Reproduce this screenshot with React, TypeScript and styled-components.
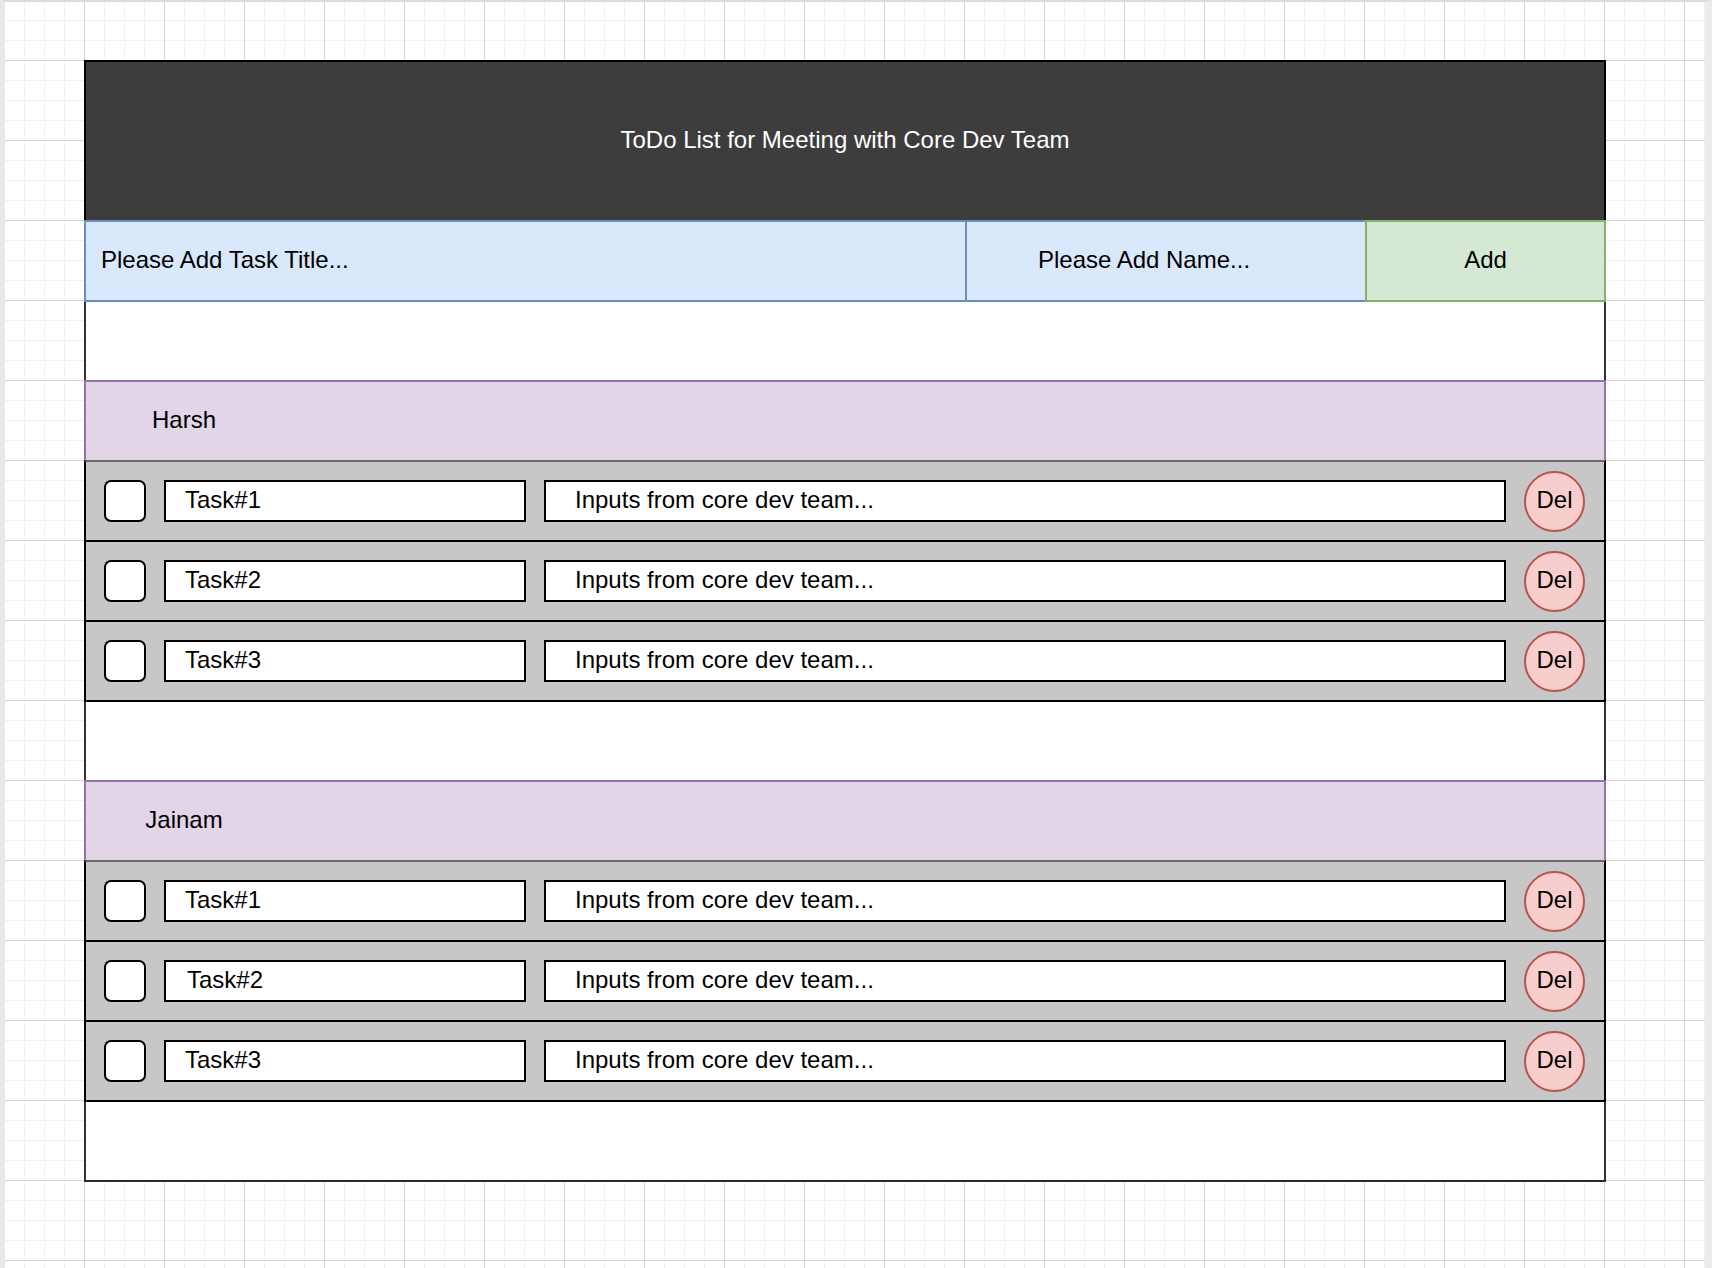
import React from "react";
import styled, { createGlobalStyle } from "styled-components";

interface Task {
  title: string;
  note: string;
  indent?: number;
}

interface Group {
  name: string;
  tasks: Task[];
}

const NOTE = "Inputs from core dev team...";

const groups: Group[] = [
  {
    name: "Harsh",
    tasks: [
      { title: "Task#1", note: NOTE },
      { title: "Task#2", note: NOTE },
      { title: "Task#3", note: NOTE },
    ],
  },
  {
    name: "Jainam",
    tasks: [
      { title: "Task#1", note: NOTE },
      { title: "Task#2", note: NOTE, indent: 21 },
      { title: "Task#3", note: NOTE },
    ],
  },
];

const App = () => {
  return (
    <>
      <GlobalStyle />
      <Canvas>
        <Board>
          <Header>ToDo List for Meeting with Core Dev Team</Header>
          <InputRow>
            <TitleField>Please Add Task Title...</TitleField>
            <NameField>Please Add Name...</NameField>
            <AddButton>Add</AddButton>
          </InputRow>
          {groups.map((group, gi) => (
            <React.Fragment key={group.name}>
              <Spacer />
              <GroupHeader>
                <GroupName>{group.name}</GroupName>
              </GroupHeader>
              {group.tasks.map((task, ti) => (
                <TaskRow key={ti} $first={ti === 0}>
                  <Checkbox />
                  <TitleBox $indent={task.indent ?? 19}>{task.title}</TitleBox>
                  <NoteBox>{task.note}</NoteBox>
                  <DelButton>Del</DelButton>
                </TaskRow>
              ))}
              {gi === groups.length - 1 ? <Spacer $last /> : null}
            </React.Fragment>
          ))}
        </Board>
      </Canvas>
    </>
  );
};

export default App;

const GlobalStyle = createGlobalStyle`
  html, body {
    margin: 0;
    padding: 0;
  }
  body {
    font-family: "Liberation Sans", Arial, Helvetica, sans-serif;
    color: #000;
  }
  * {
    box-sizing: border-box;
  }
`;

const Canvas = styled.div`
  min-height: 100vh;
  border-top: 2px solid #dcdcdc;
  border-left: 5px solid #e9e9e9;
  border-right: 7px solid #ececec;
  padding: 58px 0 0 79px;
  background-color: #fff;
  background-image:
    linear-gradient(to right, #d5d5d5 1px, transparent 1px),
    linear-gradient(to bottom, #d5d5d5 1px, transparent 1px),
    linear-gradient(to right, #f1f1f1 1px, transparent 1px),
    linear-gradient(to bottom, #f1f1f1 1px, transparent 1px);
  background-size: 80px 80px, 80px 80px, 20px 20px, 20px 20px;
  background-position: 4px 60px, 4px 60px, 4px 0, 4px 0;
  background-origin: border-box;
`;

const Board = styled.div`
  width: 1522px;
  display: flex;
  flex-direction: column;
  font-size: 24px;
`;

/* each boundary is a single 2px line, so shapes share edges */
const Header = styled.div`
  height: 160px;
  border: 2px solid #000;
  border-bottom: none;
  padding-bottom: 2px;
  background: #3d3d3d;
  color: #fff;
  display: flex;
  align-items: center;
  justify-content: center;
`;

const InputRow = styled.div`
  display: grid;
  grid-template-columns: 881px 400px 241px;
  height: 82px;
`;

const Field = styled.div`
  background: #dae8fc;
  border: 2px solid #6c8ebf;
  padding-bottom: 2px;
  display: flex;
  align-items: center;
`;

const TitleField = styled(Field)`
  border-right: none;
  padding-left: 15px;
`;

const NameField = styled(Field)`
  border-right: none;
  justify-content: center;
  padding-right: 44px;
`;

const AddButton = styled.div`
  background: #d5e8d4;
  border: 2px solid #82b366;
  padding-bottom: 2px;
  display: flex;
  align-items: center;
  justify-content: center;
`;

const Spacer = styled.div<{ $last?: boolean }>`
  height: ${(p) => (p.$last ? 80 : 78)}px;
  background: #fff;
  border-left: 2px solid #333;
  border-right: 2px solid #333;
  border-bottom: ${(p) => (p.$last ? "2px solid #2b2b2b" : "none")};
`;

const GroupHeader = styled.div`
  height: 80px;
  background: #e1d5e7;
  border: 2px solid #9673a6;
  border-bottom: none;
  padding-bottom: 2px;
  display: flex;
  align-items: center;
`;

const GroupName = styled.div`
  width: 196px;
  text-align: center;
`;

const TaskRow = styled.div<{ $first?: boolean }>`
  height: ${(p) => (p.$first ? 82 : 80)}px;
  background: #c7c7c7;
  border-left: 2px solid #000;
  border-right: 2px solid #000;
  border-bottom: 2px solid #000;
  border-top: ${(p) => (p.$first ? "2px solid #6a6a6a" : "none")};
  display: flex;
  align-items: center;
  gap: 18px;
  padding: 0 19px 0 18px;
`;

const Checkbox = styled.div`
  width: 42px;
  height: 42px;
  flex: none;
  background: #fff;
  border: 2px solid #000;
  border-radius: 7px;
`;

const TextBox = styled.div`
  height: 42px;
  background: #fff;
  border: 2px solid #000;
  padding-bottom: 2px;
  display: flex;
  align-items: center;
  white-space: nowrap;
`;

const TitleBox = styled(TextBox)<{ $indent: number }>`
  width: 362px;
  flex: none;
  padding-left: ${(p) => p.$indent}px;
`;

const NoteBox = styled(TextBox)`
  flex: 1;
  padding-left: 29px;
`;

const DelButton = styled.div`
  width: 61px;
  height: 61px;
  flex: none;
  border-radius: 50%;
  background: #f8cecc;
  border: 2px solid #b85450;
  padding-bottom: 2px;
  display: flex;
  align-items: center;
  justify-content: center;
`;
